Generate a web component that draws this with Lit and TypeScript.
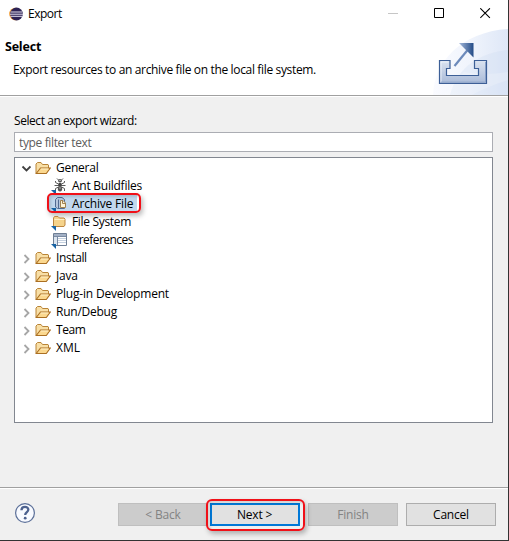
import { LitElement, html, svg, css } from "lit";
import { customElement, property, state } from "lit/decorators.js";
import { classMap } from "lit/directives/class-map.js";
import { styleMap } from "lit/directives/style-map.js";

const pointer = svg`<path d="M0 13h5v5z" fill="#1763a4"/>`;

const icons: Record<string, unknown> = {
  folder: svg`
    <path d="M1 13.300V4l1.500-1.500h3.500l1.500 2h5.500l.5.5V8" fill="#f8dfa6" stroke="#b98437"/>
    <path d="M1.200 13.500L5.500 8H15.300L11.300 13.500z" fill="#fbd88f" stroke="#ab6f22" stroke-width="1.100"/>
    <path d="M5.800 9h7.600" stroke="#fff0c8"/>`,
  ant: svg`
    <g stroke="#5c5c5c" fill="none" stroke-width="1"><path d="M6 1.500l2 2M12 1.500l-2 2M4.500 4v1.500l3 1.500h3l3-1.500V4M3.500 8.500H14.500M4.500 14v-2.500l3-1.500h3l3 1.500V14"/></g>
    <ellipse cx="9" cy="3.700" rx="2" ry="1.700" fill="#555"/><circle cx="9" cy="7.500" r="1.700" fill="#444"/><ellipse cx="9" cy="11.700" rx="2.200" ry="2.700" fill="#555"/>
    <path d="M8 3.500h2M8 11h2" stroke="#aaa"/>${pointer}`,
  archive: svg`
    <path d="M4.500 4.500L6.500 2.500H11L13.500 4.500V13.500H6.500L4.500 12z" fill="#b5c5dc" stroke="#526a91"/>
    <path d="M7.500 4.500V13" stroke="#526a91"/><path d="M9.500 5.500h2.500l2.500 2.500v4.500h-5z" fill="#fff4d8" stroke="#a08250"/>
    <path d="M11.500 5.500v3h3" fill="none" stroke="#a08250"/>${pointer}`,
  files: svg`
    <path d="M2.500 13V5l1-1.500h3.500l1.500 1.500h4.500l1 1V12l-1 1.500H3z" fill="#f5d38b" stroke="#bd8640"/>
    <path d="M3.500 6.500h10" stroke="#fff0c4"/>${pointer}`,
  prefs: svg`
    <path d="M2.500 2.500h13v12h-13z" fill="#fff" stroke="#6f7f95"/>
    <path d="M3 3h12v2H3z" fill="#a3b1c6"/><path d="M3 5.500h12M6.500 5v9" stroke="#7a8ba3"/>
    <path d="M7 7.500h8M7 9.500h8M7 11.500h8" stroke="#c4d0df"/><path d="M3 6h3v8H3z" fill="#dce6f1"/>${pointer}`,
};

@customElement("tree-row")
class TreeRow extends LitElement {
  static styles = css`
    :host { display: block; height: 18px; }
    .row { display: flex; align-items: center; height: 18px; position: relative; }
    .chevron { width: 10px; height: 10px; margin: 2px 4px 0 6px; flex: none; }
    .icon { width: 18px; height: 18px; flex: none; }
    .root .icon { width: 16px; height: 16px; }
    .root .label { margin-left: 5px; }
    .child { padding-left: 36px; }
    .child .label { margin-left: 3px; }
    .selected::before { content: ""; position: absolute; left: 34px; top: 0; width: 88px; height: 18px; background: #c2d8ee; }
    .selected::after { content: ""; position: absolute; box-sizing: border-box; left: 32px; top: -2px; width: 94px; height: 20px; border: 2px solid #f01018; border-radius: 5px; box-shadow: 2px 3px 5px #0004, inset 2px 2px 3px #0002; }
    .icon, .label { position: relative; }
    .label { white-space: pre; line-height: 18px; }
  `;
  @property() label = "";
  @property() icon = "folder";
  @property({ type: Number }) tracking = -0.25;
  @property({ type: Boolean }) child = false;
  @property({ type: Boolean }) selected = false;
  @property({ type: Boolean }) open = false;
  render() {
    return html`<div class=${classMap({ row: true, child: this.child, root: !this.child, selected: this.selected })}>
      ${this.child ? "" : html`<svg class="chevron" viewBox="0 0 10 10" fill="none" stroke-width="1.8">
        ${this.open ? svg`<path d="M1.500 2.500l4 4 4-4" stroke="#404040"/>` : svg`<path d="M3.500 1l4 4-4 4" stroke="#a6a6a6"/>`}
      </svg>`}
      <svg class="icon" viewBox=${this.child ? "0 0 18 18" : "0 0 16 16"}>${icons[this.icon]}</svg>
      <span class="label" style=${styleMap({ letterSpacing: `${this.tracking}px` })}>${this.label}</span>
    </div>`;
  }
}

@customElement("app-root")
class AppRoot extends LitElement {
  static styles = css`
    * { box-sizing: border-box; }
    :host { display: flex; flex-direction: column; width: 509px; height: 541px; background: #f0f0f0; border-right: 1px solid #333; border-bottom: 1px solid #333; box-sizing: border-box; overflow: hidden; color: #000; font: 12px/16px "Open Sans", "Noto Sans", sans-serif; letter-spacing: -0.25px; }
    .header { height: 96px; background: #fff; border-bottom: 1px solid #a0a0a0; position: relative; flex: none; }
    .titlebar { display: flex; align-items: center; height: 27px; padding-left: 9px; position: relative; }
    .title { letter-spacing: -0.5px; }
    .logo { width: 14px; height: 14px; margin-right: 5px; }
    .controls { margin-left: auto; display: flex; gap: 35px; margin-right: 17px; }
    .controls svg { width: 11px; height: 11px; }
    .banner { position: absolute; right: 0; top: 27px; width: 78px; height: 68px; }
    h1 { font-size: 12.5px; line-height: 18px; margin: 11px 0 0 5px; letter-spacing: -0.2px; }
    .description { margin: 6px 0 0 13px; white-space: nowrap; letter-spacing: -0.345px; }
    .body { height: 391px; border-top: 1px solid #fff; padding: 16px 15px 0 14px; flex: none; }
    .prompt { height: 19px; line-height: 16px; letter-spacing: -0.44px; }
    .filter { display: block; width: 479px; height: 20px; border: 1px solid #abadb3; background: #fff; padding: 0 4px; font: inherit; letter-spacing: -0.36px; color: #000; outline: none; border-radius: 0; }
    .filter::placeholder { color: #5c5c5c; opacity: 1; }
    .tree { width: 479px; height: 266px; margin-top: 5px; border: 1px solid #828790; background: #fff; padding-top: 1px; }
    .footer { border-top: 1px solid #a0a0a0; box-shadow: inset 0 1px #fff; flex: 1; display: flex; align-items: flex-start; padding: 15px 12px 0 14px; }
    .help { width: 22px; height: 22px; margin-top: -1px; }
    .buttons { display: flex; margin-left: auto; }
    .button { width: 90px; height: 23px; padding: 0; border: 1px solid #adadad; background: #e1e1e1; font: inherit; line-height: 20px; letter-spacing: -0.2px; color: #000; border-radius: 0; text-align: center; }
    .button:disabled { background: #ccc; border-color: #bfbfbf; color: #838383; }
    .next { position: relative; padding-right: 1px; margin: 0 8px 0 2px; border: 2px solid #0078d7; line-height: 18px; }
    .next::after { content: ""; position: absolute; inset: -6px -7px -7px -6px; border: 2px solid #f01018; border-radius: 6px; box-shadow: 2px 3px 5px #0004, inset 2px 2px 3px #0002; }
    .cancel { margin-left: 8px; }
  `;
  @state() private query = "";
  private entries = [
    { label: "General", open: true },
    { label: "Ant Buildfiles", icon: "ant", child: true },
    { label: "Archive File", icon: "archive", child: true, selected: true, tracking: -0.18 },
    { label: "File System", icon: "files", child: true, tracking: -0.33 },
    { label: "Preferences", icon: "prefs", child: true, tracking: -0.55 },
    { label: "Install", tracking: -0.38 },
    { label: "Java" },
    { label: "Plug-in Development", tracking: -0.2 },
    { label: "Run/Debug" },
    { label: "Team", tracking: -0.45 },
    { label: "XML", tracking: 0 },
  ] as { label: string; icon?: string; child?: boolean; selected?: boolean; open?: boolean; tracking?: number }[];

  render() {
    return html`
      <div class="header">
        <svg class="banner" viewBox="0 0 78 68">
          <defs>
            <linearGradient id="glow"><stop stop-color="#fafbff"/><stop offset=".5" stop-color="#f0f4fc"/><stop offset="1" stop-color="#dee7f7"/></linearGradient>
            <linearGradient id="tray" x2="0" y2="1"><stop stop-color="#dbe3f0"/><stop offset="1" stop-color="#a9bad8"/></linearGradient>
            <linearGradient id="arrow"><stop stop-color="#a3b8da"/><stop offset="1" stop-color="#244b87"/></linearGradient>
          </defs>
          <path d="M3 68C4 35 31 5 78 2v66z" fill="url(#glow)"/>
          <path d="M20 68C28 39 50 26 78 23v45z" fill="#c8d7f1" opacity=".25"/>
          <path d="M34 45q20 4 44 0v8q-22 7-36 15H14z" fill="#fff" opacity=".2"/>
          <path d="M9.500 33.500h10.500v8h-3.500v7h32v-7h-4v-8h12v23H9.500z" fill="url(#tray)" stroke="#3d5f97" stroke-width="1.200"/>
          <path d="M11 55V35h7.500" fill="none" stroke="#f3f6fb" opacity=".8"/>
          <path d="M11 55.200h44.500V35" fill="none" stroke="#8ba2c9"/>
          <path d="M24.500 39L38 22.500" stroke="#6c8abb" stroke-width="2.200"/><path d="M29 16h14.500v14.500z" fill="url(#arrow)"/>
        </svg>
        <div class="titlebar">
          <svg class="logo" viewBox="0 0 14 14"><circle cx="6.500" cy="7" r="6.300" fill="#f39a2d"/><circle cx="7.500" cy="7" r="6.400" fill="#2c2255"/><path d="M1.500 5h12M1 7.200h13M1.500 9.300h12" stroke="#e3e0ef" stroke-width="1"/></svg>
          <span class="title">Export</span>
          <div class="controls">
            <svg viewBox="0 0 11 11"><path d="M0 5.500h10" stroke="#c6c6c6"/></svg>
            <svg viewBox="0 0 11 11"><path d="M.5 .5h9v9h-9z" fill="none" stroke="#000"/></svg>
            <svg viewBox="0 0 11 11"><path d="M.3 .3l9.600 9.600M9.900 .3L.3 9.900" stroke="#000" stroke-width="1.100"/></svg>
          </div>
        </div>
        <h1>Select</h1>
        <div class="description">Export resources to an archive file on the local file system.</div>
      </div>
      <div class="body">
        <div class="prompt">Select an export wizard:</div>
        <input class="filter" placeholder="type filter text" .value=${this.query} @input=${(e: InputEvent) => (this.query = (e.target as HTMLInputElement).value)} />
        <div class="tree">
          ${this.entries.map((e) => html`<tree-row .label=${e.label} .icon=${e.icon ?? "folder"} .tracking=${e.tracking ?? -0.25} .child=${!!e.child} .selected=${!!e.selected} .open=${!!e.open}></tree-row>`)}
        </div>
      </div>
      <div class="footer">
        <svg class="help" viewBox="0 0 22 22" fill="none"><circle cx="11" cy="11" r="9.400" fill="#f8faff" stroke="#5b6f98" stroke-width="1.200"/><path d="M7.500 8.200C7.500 3.800 14.500 4 14.300 7.800C14.200 10 11.200 10.200 11.200 13" stroke="#4d628f" stroke-width="2.300"/><circle cx="11.200" cy="16.200" r="1.400" fill="#4d628f"/></svg>
        <div class="buttons">
          <button class="button" disabled>&lt; Back</button>
          <button class="button next">Next &gt;</button>
          <button class="button" disabled>Finish</button>
          <button class="button cancel">Cancel</button>
        </div>
      </div>`;
  }
}
